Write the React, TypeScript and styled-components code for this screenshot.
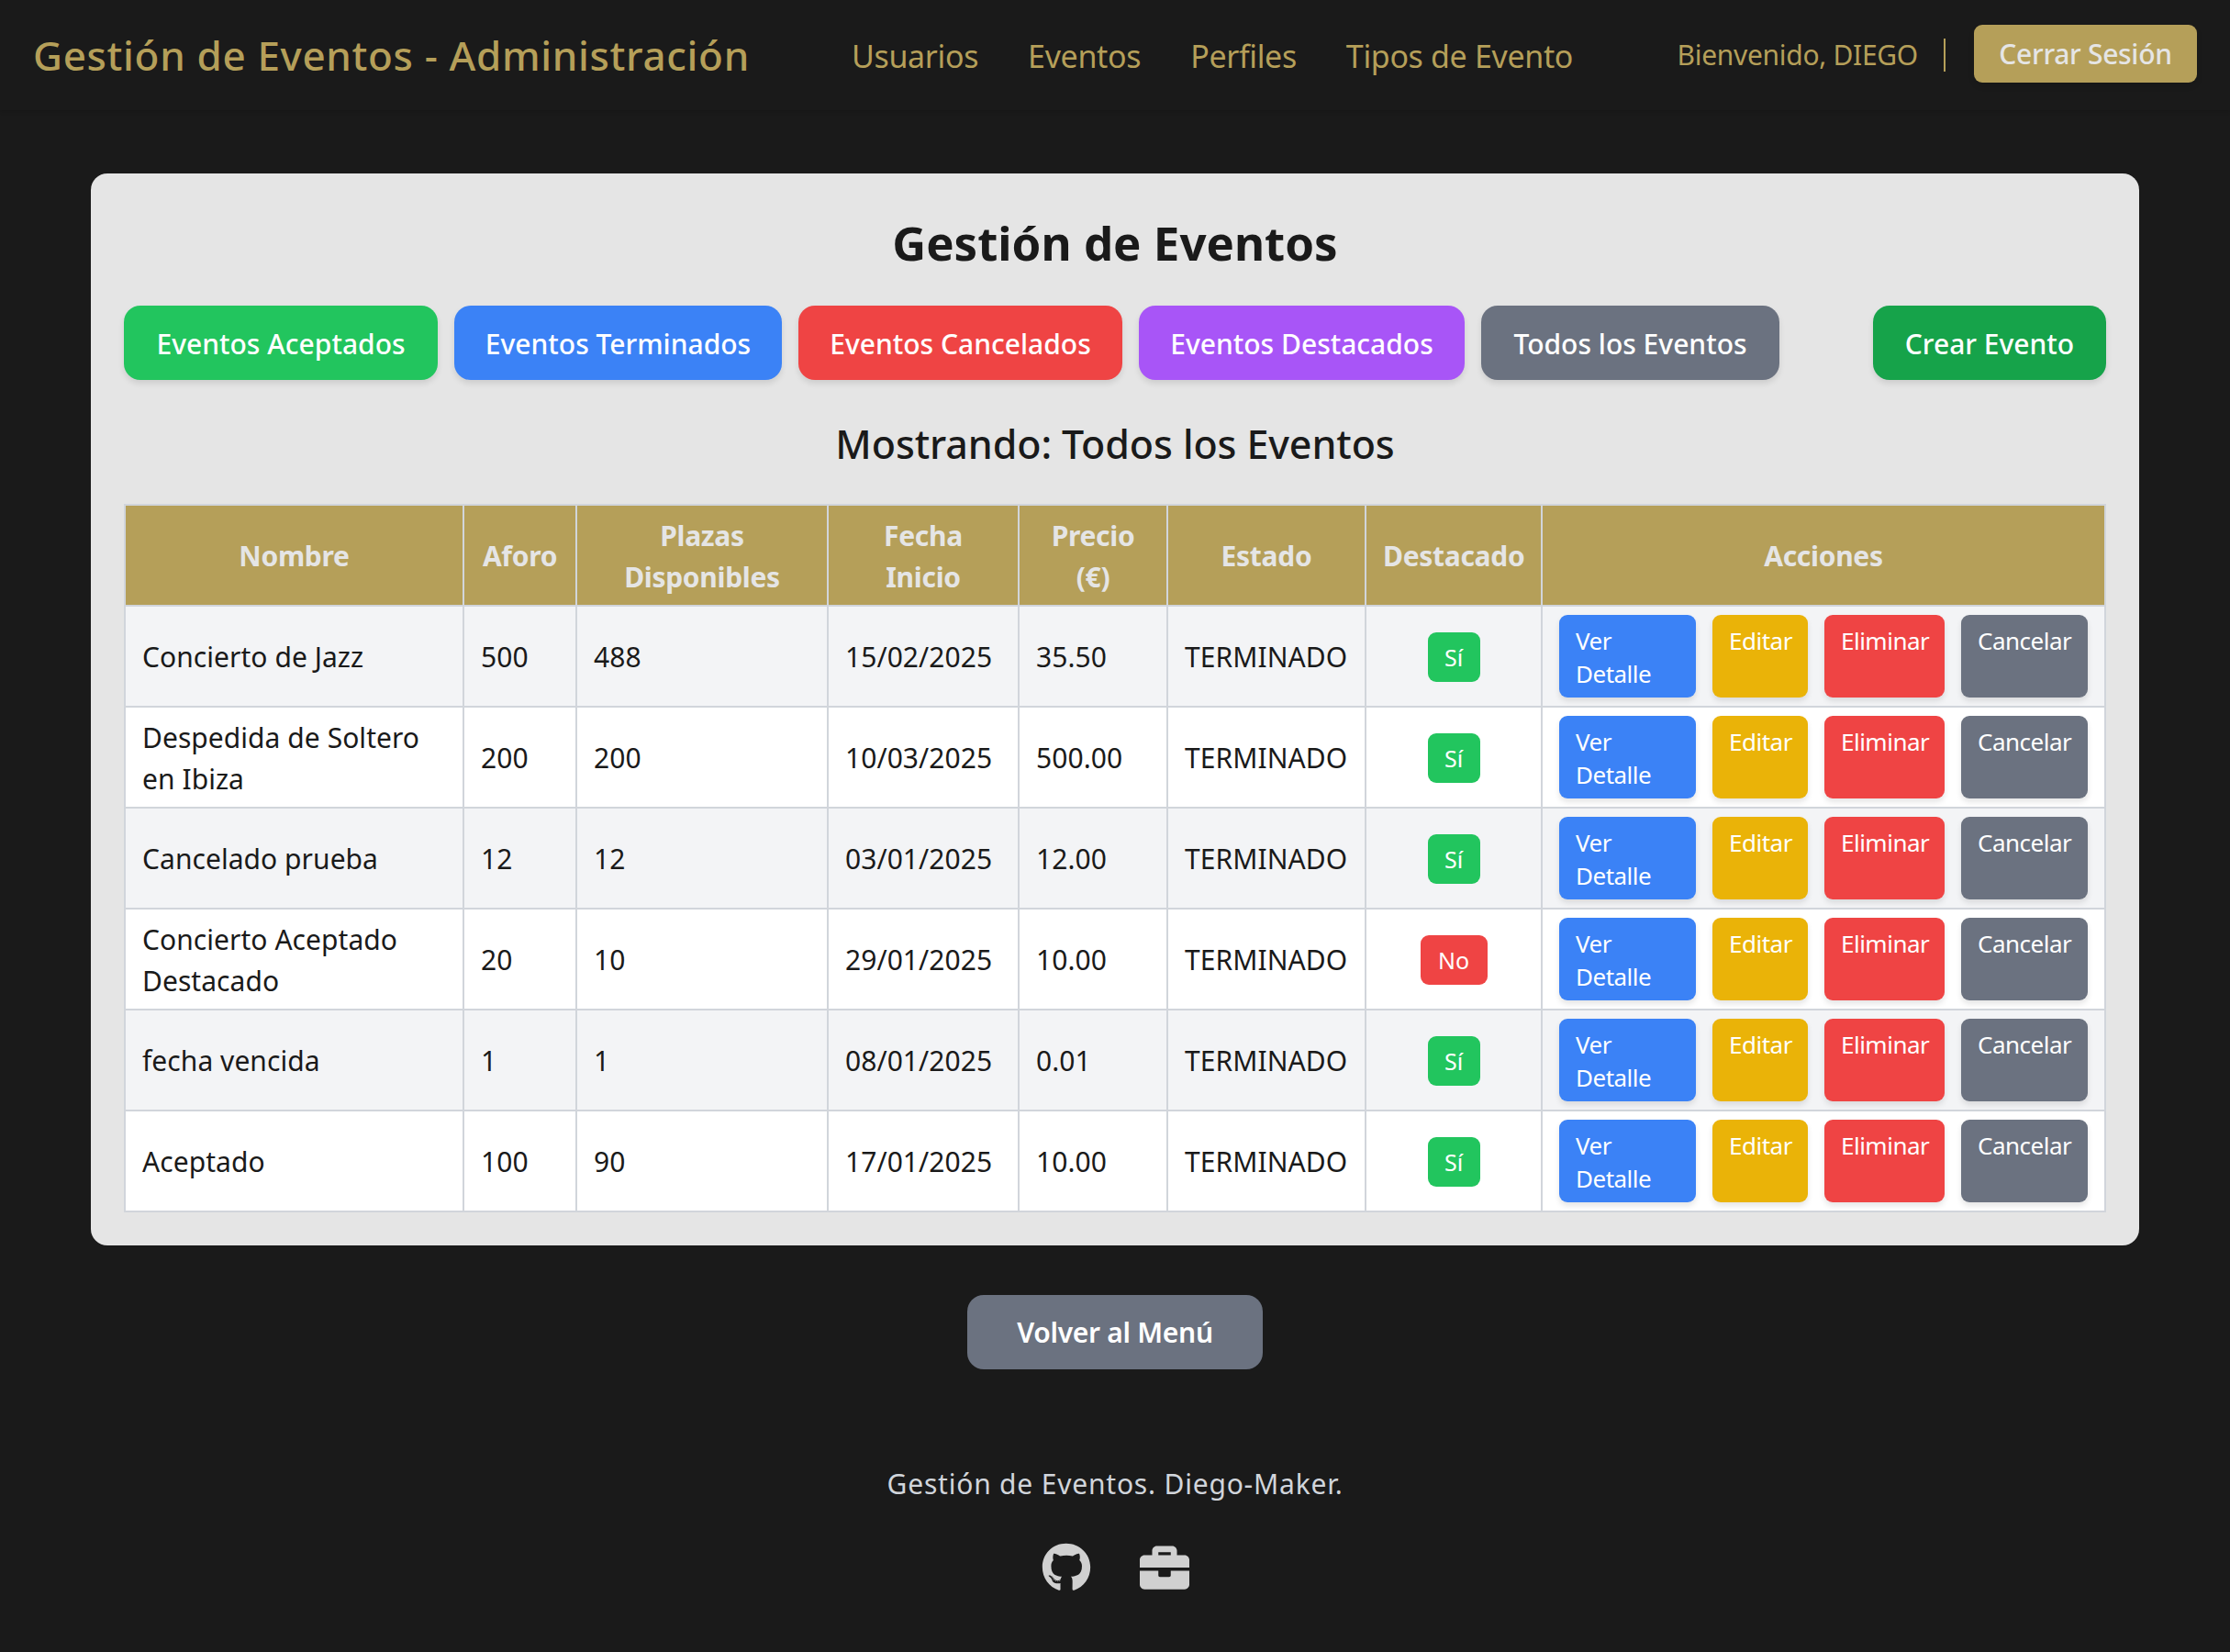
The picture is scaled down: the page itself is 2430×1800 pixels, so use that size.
import styled, { createGlobalStyle } from 'styled-components';
import { FaGithub, FaBriefcase } from 'react-icons/fa';

const GlobalStyle = createGlobalStyle`
  html, body {
    margin: 0;
    padding: 0;
    background: #1a1a1a;
  }
  body {
    font-family: "Noto Sans", "Open Sans", sans-serif;
    min-height: 1800px;
  }
`;

const Header = styled.header`
  height: 120px;
  box-sizing: border-box;
  padding: 0 36px;
  display: flex;
  align-items: center;
  color: #b59f59;
  box-shadow: 0 2px 4px rgba(0, 0, 0, 0.12);
`;

const Brand = styled.h1`
  margin: 0;
  width: 892px;
  flex: none;
  font-size: 44px;
  font-weight: 500;
  letter-spacing: 0.65px;
`;

const NavLinks = styled.nav`
  display: flex;
  gap: 54px;
  font-size: 34px;
  letter-spacing: -0.35px;
  padding-top: 2px;
`;

const UserArea = styled.div`
  margin-left: auto;
  margin-bottom: 3px;
  display: flex;
  align-items: center;
  font-size: 30px;
  letter-spacing: -0.3px;
`;

const Welcome = styled.span`
  padding-top: 2px;
`;

const Separator = styled.span`
  width: 2px;
  height: 36px;
  background: #b59f59;
  margin: 3px 31px 0 28px;
`;

const LogoutButton = styled.button`
  height: 63px;
  width: 243px;
  border: none;
  border-radius: 9px;
  background: #b59f59;
  color: #e5e5e5;
  font: 500 30px "Noto Sans", sans-serif;
  letter-spacing: -0.3px;
  box-shadow: 0 4px 6px rgba(0, 0, 0, 0.1);
`;

const Panel = styled.main`
  width: 2232px;
  box-sizing: border-box;
  margin: 69px auto 0;
  padding: 36px;
  background: #e5e5e5;
  border-radius: 18px;
`;

const Title = styled.h2`
  margin: 0;
  height: 108px;
  line-height: 78px;
  text-align: center;
  font-size: 51px;
  font-weight: 700;
  color: #1a1a1a;
`;

const FilterRow = styled.div`
  display: flex;
  gap: 18px;
`;

const FilterButton = styled.button<{ $bg: string; $w: number; $push?: boolean }>`
  height: 81px;
  padding: 2px 0 0;
  width: ${(p) => p.$w}px;
  border: none;
  border-radius: 18px;
  background: ${(p) => p.$bg};
  color: #fff;
  font: 500 30px "Noto Sans", sans-serif;
  box-shadow: 0 4px 6px rgba(0, 0, 0, 0.1);
  margin-left: ${(p) => (p.$push ? 'auto' : '0')};
`;

const Showing = styled.h3`
  margin: 0;
  height: 135px;
  line-height: 140px;
  text-align: center;
  font-size: 43px;
  font-weight: 500;
  color: #1a1a1a;
  letter-spacing: -0.1px;
`;

const Table = styled.table`
  width: 2158px;
  table-layout: fixed;
  border-collapse: collapse;
  border: 2px solid #d1d5db;
  font-size: 30px;
  color: #1a1a1a;
`;

const Th = styled.th<{ $w: number }>`
  width: ${(p) => p.$w}px;
  height: 110px;
  box-sizing: border-box;
  padding: 1px 18px 0;
  background: #b59f59;
  color: #e5e5e5;
  border: 2px solid #d1d5db;
  font-size: 30px;
  font-weight: 700;
  line-height: 45px;
  letter-spacing: -0.3px;
  text-align: center;
`;

const Row = styled.tr<{ $alt: boolean }>`
  background: ${(p) => (p.$alt ? '#f3f4f6' : '#ffffff')};
`;

const Td = styled.td<{ $center?: boolean }>`
  height: 110px;
  box-sizing: border-box;
  padding: 1px 18px 0;
  border: 2px solid #d1d5db;
  line-height: 45px;
  letter-spacing: 0.05px;
  text-align: ${(p) => (p.$center ? 'center' : 'left')};
`;

const ActionsCell = styled.td`
  height: 110px;
  box-sizing: border-box;
  padding: 9px 18px;
  border: 2px solid #d1d5db;
`;

const Actions = styled.div`
  display: flex;
  gap: 18px;
`;

const ActionButton = styled.button<{ $bg: string; $w: number }>`
  width: ${(p) => p.$w}px;
  height: 90px;
  flex: none;
  box-sizing: border-box;
  padding: 10px 18px 8px;
  border: none;
  border-radius: 9px;
  background: ${(p) => p.$bg};
  color: #fff;
  font: 400 26px/36px "Noto Sans", sans-serif;
  letter-spacing: -0.5px;
  display: flex;
  flex-direction: column;
  align-items: flex-start;
  justify-content: flex-start;
  box-shadow: 0 4px 6px rgba(0, 0, 0, 0.1);
`;

const Badge = styled.span<{ $yes: boolean }>`
  display: block;
  margin: 0 auto;
  width: ${(p) => (p.$yes ? '57px' : '73px')};
  height: 54px;
  line-height: 54px;
  border-radius: 9px;
  background: ${(p) => (p.$yes ? '#22c55e' : '#ef4444')};
  color: #fff;
  font-size: 25px;
  letter-spacing: 0;
  text-align: center;
`;

const BackRow = styled.div`
  display: flex;
  justify-content: center;
  margin-top: 54px;
`;

const BackButton = styled.button`
  width: 322px;
  height: 81px;
  border: none;
  border-radius: 18px;
  background: #6b7280;
  color: #fff;
  font: 600 30px "Noto Sans", sans-serif;
  letter-spacing: -0.3px;
`;

const Footer = styled.footer`
  margin-top: 98px;
  display: flex;
  flex-direction: column;
  align-items: center;
  color: #d1d5db;
`;

const FooterText = styled.p`
  margin: 0;
  line-height: 54px;
  font-size: 30px;
  letter-spacing: 0.8px;
`;

const Socials = styled.div`
  display: flex;
  gap: 53px;
  margin-top: 37px;
  font-size: 54px;
  color: #d0d0d0;
  & > svg {
    display: block;
  }
`;

const events = [
  ['Concierto de Jazz', '500', '488', '15/02/2025', '35.50', true],
  ['Despedida de Soltero en Ibiza', '200', '200', '10/03/2025', '500.00', true],
  ['Cancelado prueba', '12', '12', '03/01/2025', '12.00', true],
  ['Concierto Aceptado Destacado', '20', '10', '29/01/2025', '10.00', false],
  ['fecha vencida', '1', '1', '08/01/2025', '0.01', true],
  ['Aceptado', '100', '90', '17/01/2025', '10.00', true],
] as const;

const filters = [
  ['Eventos Aceptados', '#22c55e', 342],
  ['Eventos Terminados', '#3b82f6', 357],
  ['Eventos Cancelados', '#ef4444', 353],
  ['Eventos Destacados', '#a855f7', 355],
  ['Todos los Eventos', '#6b7280', 325],
] as const;

export default function App() {
  return (
    <>
      <GlobalStyle />
      <Header>
        <Brand>Gestión de Eventos - Administración</Brand>
        <NavLinks>
          <span>Usuarios</span>
          <span>Eventos</span>
          <span>Perfiles</span>
          <span>Tipos de Evento</span>
        </NavLinks>
        <UserArea>
          <Welcome>Bienvenido, DIEGO</Welcome>
          <Separator />
          <LogoutButton>Cerrar Sesión</LogoutButton>
        </UserArea>
      </Header>
      <Panel>
        <Title>Gestión de Eventos</Title>
        <FilterRow>
          {filters.map(([label, bg, w]) => (
            <FilterButton key={label} $bg={bg} $w={w}>
              {label}
            </FilterButton>
          ))}
          <FilterButton $bg="#16a34a" $w={254} $push>
            Crear Evento
          </FilterButton>
        </FilterRow>
        <Showing>Mostrando: Todos los Eventos</Showing>
        <Table>
          <thead>
            <tr>
              <Th $w={369}>Nombre</Th>
              <Th $w={123}>Aforo</Th>
              <Th $w={274}>Plazas Disponibles</Th>
              <Th $w={208}>Fecha Inicio</Th>
              <Th $w={162}>Precio (€)</Th>
              <Th $w={216}>Estado</Th>
              <Th $w={192}>Destacado</Th>
              <Th $w={614}>Acciones</Th>
            </tr>
          </thead>
          <tbody>
            {events.map(([name, cap, free, date, price, featured], i) => (
              <Row key={name} $alt={i % 2 === 0}>
                <Td>{name}</Td>
                <Td>{cap}</Td>
                <Td>{free}</Td>
                <Td>{date}</Td>
                <Td>{price}</Td>
                <Td>TERMINADO</Td>
                <Td $center>
                  <Badge $yes={featured}>{featured ? 'Sí' : 'No'}</Badge>
                </Td>
                <ActionsCell>
                  <Actions>
                    <ActionButton $bg="#3b82f6" $w={149}>
                      <span>Ver</span>
                      <span>Detalle</span>
                    </ActionButton>
                    <ActionButton $bg="#eab308" $w={104}>Editar</ActionButton>
                    <ActionButton $bg="#ef4444" $w={131}>Eliminar</ActionButton>
                    <ActionButton $bg="#6b7280" $w={138}>Cancelar</ActionButton>
                  </Actions>
                </ActionsCell>
              </Row>
            ))}
          </tbody>
        </Table>
      </Panel>
      <BackRow>
        <BackButton>Volver al Menú</BackButton>
      </BackRow>
      <Footer>
        <FooterText>Gestión de Eventos. Diego-Maker.</FooterText>
        <Socials>
          <FaGithub />
          <FaBriefcase />
        </Socials>
      </Footer>
    </>
  );
}
